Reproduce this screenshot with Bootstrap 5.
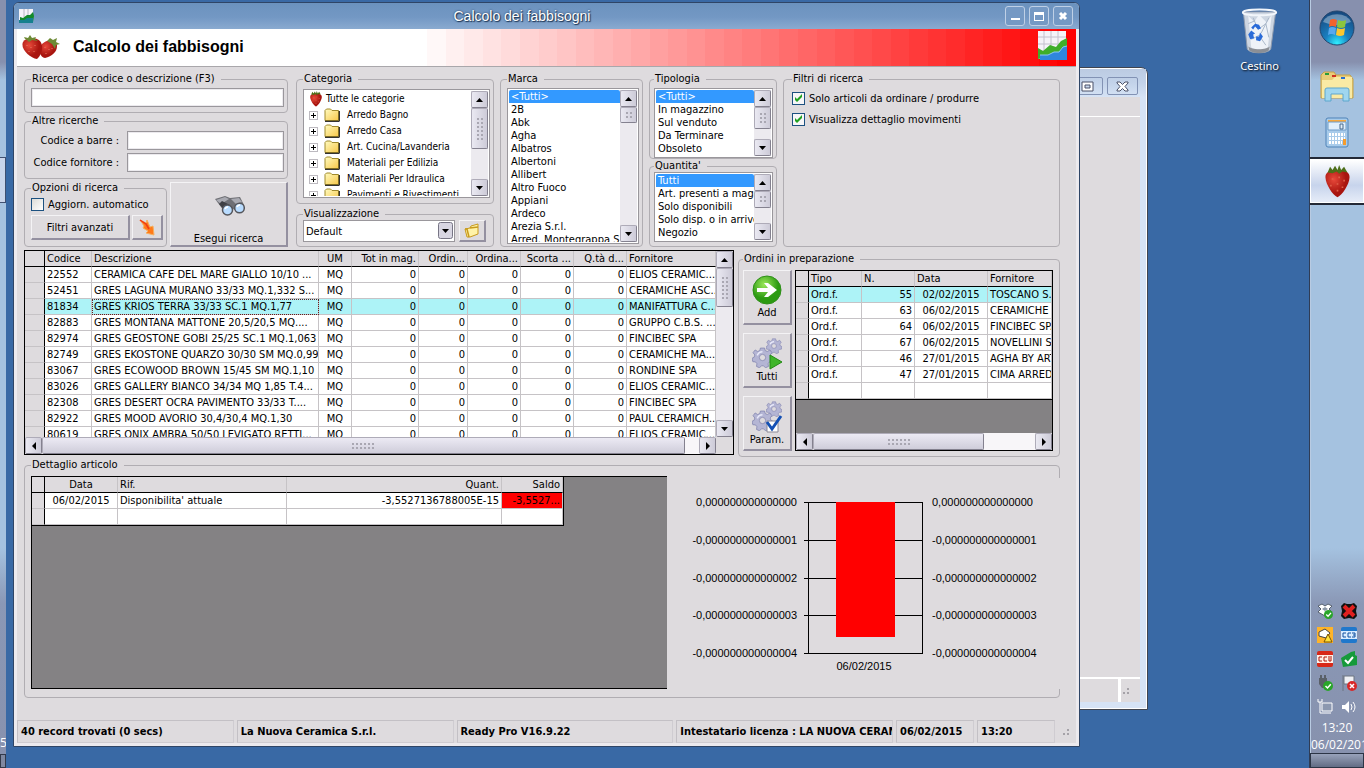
<!DOCTYPE html>
<html lang="it">
<head>
<meta charset="utf-8">
<meta name="viewport" content="width=device-width, initial-scale=1">
<title>Calcolo dei fabbisogni</title>
<link href="https://cdn.jsdelivr.net/npm/bootstrap@5.3.0/dist/css/bootstrap.min.css" rel="stylesheet">
<style>
:root{--face:#dedbde;--edge:#b0adb2;--line:#c6c3c6;--sel:#3399ff;--cyan:#adf3f7;--ui:"DejaVu Sans Condensed","DejaVu Sans",sans-serif}
body{font-family:var(--ui);font-size:11px;line-height:13px;color:#000;background:#3969a5;overflow:hidden}
svg{display:block;flex:none}
/* desktop */
.strip,.taskbar{background:linear-gradient(#8790ae 0,#8790ae 62px,#a5c2e0 80px,#a5c2e0 calc(100% - 220px),#8a98b6 calc(100% - 165px),#8791ad 100%)}
.strip{width:6px;flex:none;overflow:hidden;color:#fff;font:12px/14px "Open Sans",sans-serif}
.strip-task{height:46px;margin-top:157px;border:1px solid #405070;border-left:0;background:#c9d5ea}
.strip-end{height:14px;border:1px solid #333a4a;background:#7f88a0}
.desk{width:229px;padding-top:8px;padding-right:30px}
.desk-item{color:#fff;font:11px/14px "Noto Sans",sans-serif;text-shadow:1px 1px 2px #000;text-decoration:none}
.taskbar{width:55px;border-left:1px solid #2f3c55;box-shadow:inset 1px 0 #b9cbe2;overflow:hidden}
.taskbar button{background:none;border:0;padding:0}
.task-on.task-on{background:linear-gradient(#fff,#d5def0 45%,#c7d4ec 60%,#e6ecf8);border:1px solid #fff;outline:2px solid #232936;height:44px}
.tray{display:grid;grid-template-columns:16px 16px;gap:8px;margin-bottom:4px}
.clock{color:#fff;font:12px/17px "Open Sans","Noto Sans",sans-serif;white-space:nowrap}
.show-desk{height:15px;border:1px solid #2c3546;background:linear-gradient(#98a2ba,#626c84)}
/* windows */
.win{background:var(--face);border:1px solid #2f4566;border-radius:6px 6px 0 0;margin:2px 0 21px 7px;box-shadow:inset 0 0 0 1px #dfe7f2;z-index:2}
.win-body{margin:0 3px 3px;box-shadow:0 0 0 3px #eceaee}
.titlebar{height:26px;background:linear-gradient(#6b92be,#7398c4 55%,#8aaad0);border-radius:5px 5px 0 0;padding:0 6px 0 5px;color:#fff;position:relative;z-index:1}
.titlebar h1{font:14px/18px "Liberation Sans",sans-serif;text-shadow:1px 1px 1px #1d3555,0 0 2px #1d3555}
.cap{width:20px;height:20px;padding:0;border:1px solid #bfd0e6;border-radius:3px;background:#7599c4}
.backwin{right:216px;left:60px;top:67px;bottom:58px;border:1px solid #41454f;border-radius:7px 7px 0 0;background:#d6e3f5;padding:0 7px 7px;box-shadow:inset 0 0 0 1px #fff}
.back-title{height:28px;background:linear-gradient(#bccbe2,#c3d3ea 50%,#d6e3f5);margin:1px -6px 0;padding:8px 8px 2px}
.back-title button{height:18px;border:1px solid #8292b4;border-radius:2px;background:none;padding:0}
.back-client{background:var(--face)}
.back-menu{height:20px;border-bottom:1px solid #fff}
.back-status{height:25px;border-top:2px solid #fff}
.back-grip{width:22px;border-left:3px solid #fff}
/* banner */
.banner{height:38px;background:#fff;border-bottom:1px solid #a9a7ab;position:relative}
.banner h2{font:bold 16px/20px "Liberation Sans",sans-serif;margin-top:-2px}
.fade-steps{position:absolute;left:37%;right:0;top:0;bottom:0}
.banner-row{position:relative}
/* page body */
.page{padding:6px 16px 0 7px}
.filters{gap:6px;height:174px}
/* group boxes */
fieldset{border:1px solid var(--edge);border-radius:4px;padding:3px 3px 5px 6px}
legend{float:none;width:auto;font-size:11px;line-height:12px;padding:0 6px 0 1px;margin:0}
legend label{display:block}
.field,.listbox,.combo{background:#fff;border:1px solid #9a979c;border-radius:0;font-size:11px}
.field{height:19px;min-width:0;outline:1px solid #eceaee;outline-offset:-2px}
.btn3{background:var(--face);border:1px solid #f4f3f5;border-right:2px solid #9490a0;border-bottom:2px solid #9490a0;border-radius:0;padding:0;font-size:11px;line-height:13px;color:#000}
.tick{appearance:none;width:13px;height:13px;border:1px solid #1c5180;margin:0;background:linear-gradient(135deg,#dcdcd7,#fff)}
.tick:checked{background:#f7f6f8 url("data:image/svg+xml,%3Csvg xmlns='http://www.w3.org/2000/svg' viewBox='0 0 11 11'%3E%3Cpath d='M2 4v3l2 2 5-5V1L4 6z' fill='%2321a121'/%3E%3C/svg%3E")}
/* lists */
.listbox{padding:1px;overflow:hidden}
.listbox select{appearance:none;border:0;outline:0;padding:0;background:#fff;overflow:hidden;font:11px/13px var(--ui);flex:1 1 0;min-width:0;height:100%;scrollbar-width:none}
.listbox option{padding:0 0 0 2px;min-height:13px;height:13px;line-height:13px}
.listbox option:checked{background:linear-gradient(var(--sel),var(--sel));-webkit-text-fill-color:#fff}
.combo{appearance:none;height:22px;padding:0 2px;color:#000;background:#fff url("data:image/svg+xml,%3Csvg xmlns='http://www.w3.org/2000/svg' width='15' height='18'%3E%3Crect x='.5' y='.5' width='14' height='16' rx='2' fill='%23d8d6e2' stroke='%23777585'/%3E%3Cpath d='M4 7h7l-3.500 4z'/%3E%3C/svg%3E") no-repeat right 1px center}
.tree{font-size:10px;line-height:16px;list-style:none;margin:0;padding:0;white-space:nowrap;overflow:hidden}
.tree li{height:16px;gap:3px}
.node-box{width:9px;height:9px;margin:0 3px 0 4px;border:1px solid #bdbac0;background:#fff}
/* scroll bars */
.sb{background:#eceaef;width:17px;flex:none;display:flex;flex-direction:column}
.sb.hz{width:auto;height:17px;flex-direction:row;background:#f8f6f9}
.sb button,.thumb{border:1px solid #84818f;border-top-color:#aeabb8;border-left-color:#aeabb8;border-radius:2px;background:linear-gradient(90deg,#eae9f2,#cdcbd8);padding:0}
.sb button{width:17px;height:17px;display:flex;align-items:center;justify-content:center;flex:none}
.thumb{display:flex;align-items:center;justify-content:center}
.hz .thumb{background:linear-gradient(#eceaf4,#cfcdda)}
.dots{width:8px;height:60%;max-height:24px;background:radial-gradient(#a9a7b2 1px,transparent 1px) 0 0/4px 4px}
.hz .dots{width:24px;height:8px}
/* grids */
.pane{border:1px solid #000;background:#848284;overflow:hidden}
.grid{table-layout:fixed;border-collapse:separate;border-spacing:0;width:100%;background:#fff}
.grid th,.grid td{height:16px;padding:1px 2px 0;line-height:14px;font-weight:400;white-space:nowrap;overflow:hidden;border-right:1px solid var(--line);border-bottom:1px solid var(--line)}
.grid th{background:var(--face);border-bottom-color:#000}
.grid th:first-child,.grid td:first-child{background:var(--face);border-right-color:#000}
.grid .sel td:not(:first-child){background:var(--cyan)}
.grid .cur{outline:1px dotted #602020;outline-offset:-1px}
.main-pane{height:205px}
.detail-pane{height:213px;border-right:0;margin-top:-2px}
.detail-grid{width:531px;border-right:1px solid #000;border-bottom:1px solid #000}
.grid .neg{background:#f00}
.order-grid{border-bottom:1px solid #000}
.chart-pane{width:393px;margin-right:-1px;padding-left:3px;background:var(--face);flex:none}
.chart-pane text{font:11px "Liberation Sans",sans-serif}
/* status bar */
.status{gap:3px;font-weight:700;font-size:11px;height:23px}
.status>span{border:1px solid #c3c0c5;border-right-color:#cfccd1;border-bottom-color:#cfccd1;padding:0 3px;line-height:22px;white-space:nowrap;overflow:hidden;flex:217 1 0}
.status>.fixed{flex:0 0 78px}
.col-a{width:266px;padding-right:2px}.col-b{width:198px}.col-c{width:143px}.col-d{width:128px}
.codes{height:64px;margin:2px 0 3px}
.opt-row{gap:3px;height:65px}
.opt-box{width:143px}
.orders{width:322px;margin-top:3px;padding:5px 6px 5px 4px}
.order-row{gap:3px}
.tools{width:49px}
.order-pane{height:181px;min-width:0}
</style>
</head>
<body>
<svg width="0" height="0" class="position-absolute" aria-hidden="true">
<defs>
<linearGradient id="gy" x1="0" y1="0" x2="1" y2="1"><stop stop-color="#fffbc0"/><stop offset="1" stop-color="#f7c84a"/></linearGradient>
<radialGradient id="gr" cx=".35" cy=".35"><stop stop-color="#e8493a"/><stop offset="1" stop-color="#a8150f"/></radialGradient>
<radialGradient id="gg" cx=".4" cy=".3"><stop stop-color="#9be85a"/><stop offset="1" stop-color="#2c9a12"/></radialGradient>
<symbol id="up" viewBox="0 0 7 4"><path d="M0 4h7L3.500 0z"/></symbol>
<symbol id="dn" viewBox="0 0 7 4"><path d="M0 0h7L3.500 4z"/></symbol>
<symbol id="lf" viewBox="0 0 4 8"><path d="M4 0v8L0 4z"/></symbol>
<symbol id="rt" viewBox="0 0 4 8"><path d="M0 0v8l4-4z"/></symbol>
<symbol id="berry" viewBox="0 0 16 20"><path d="M8 19.500C5 18 1 12 .7 7.500 .5 4.500 3 3 8 3s7.500 1.500 7.300 4.500C15 12 11 18 8 19.500z" fill="url(#gr)"/><path d="M5 8v1M9 7v1M12 9v1M4 12v1M8 11v1M11 13v1M8 15v1" stroke="#e0604a"/><path d="M2 4.500L3.500 1 5 3 6.500.5 8 3l1-3 1.200 3L12 1l2 3.500-3-.6-2 1.400-1.500-1.400L5 5z" fill="#4d6e18"/></symbol>
<symbol id="gear" viewBox="-10 -10 20 20"><g fill="#b4b5d4" stroke="#7e80ac" stroke-width=".7"><path d="M-2-9h4l.6 2.400 2 .9L7-7.200 9-4.600 7.300-2.400 8-.2 10 .8 9.200 4l-2.500.2-1.400 1.700L5.700 8.500 2.800 9.800 1 7.900H-1L-2.800 9.800-5.700 8.500-5.300 5.900-6.700 4.200-9.200 4-10 .8-8-.2-7.300-2.400-9-4.600-7-7.200l2.400 1.500 2-.9z"/><circle r="3" fill="#dedbde"/></g><path d="M-5-2A5.500 5.500 0 0 1 0-5.500" stroke="#e9eafa" stroke-width="1.500" fill="none"/></symbol>
<symbol id="folder" viewBox="0 0 16 14"><path d="M1 12.500V2.500L2.500 1h4L8 2.500h6.500v10z" fill="url(#gy)" stroke="#a08a2c"/><path d="M1 13.300h14.300V3" fill="none" stroke="#000"/></symbol>
<symbol id="graph" viewBox="0 0 31 31"><path d="M1 1h28v28H1z" fill="#f5f3f8"/><path d="M1 7h28M1 14h28M1 21h28M7 1v28M14 1v28M21 1v28" stroke="#c3c0cc"/><path d="M1 18l5 3 7-6 6 2 5-6 6-3v16L1 29z" fill="#3fae2a"/><path d="M3 30v-5l8 0 6-3 5 0 4-5 4-1v14z" fill="#2f86dd"/><path d="M3 25h8l6-3h5l4-5 4-1" fill="none" stroke="#8cc6f6"/></symbol>
<symbol id="graph-sm" viewBox="0 0 16 16"><path d="M0 1h14v12H0z" fill="#f5f3f8"/><path d="M5 1v8M9 1v6" stroke="#b8b6c2"/><path d="M1 9l3 1 4-3 3 0 3-3 1 4-1 6H1z" fill="#138a2a"/><path d="M0 12h5l3-2h6v5H0z" fill="#16808e"/></symbol>
<symbol id="tick" viewBox="0 0 10 10"><circle cx="5" cy="5" r="5" fill="#2aa52a"/><path d="M2.500 5l2 2L7.800 3.200" fill="none" stroke="#fff" stroke-width="1.500"/></symbol>
</defs>
</svg>

<div class="d-flex vh-100 position-relative">
  <div class="strip d-flex flex-column"><div class="strip-task"></div><span class="mt-auto">5</span><div class="strip-end mt-1"></div></div>

  <section class="backwin position-absolute d-flex flex-column" aria-label="Finestra in secondo piano">
    <div class="back-title d-flex justify-content-end gap-1">
      <button type="button" aria-label="Ripristina" class="px-2"><svg width="13" height="11"><path d="M1 1h11v9H1zM4 4h5v3H4z" fill="#fff" fill-rule="evenodd" stroke="#4a5068"/></svg></button>
      <button type="button" aria-label="Chiudi" class="px-2"><svg width="13" height="11"><path d="M1 1h3l2.500 2.500L9 1h3v1L9 5.500 12 9v1H9L6.500 7.500 4 10H1V9l3-3.500L1 2z" fill="#fff" stroke="#4a5068"/></svg></button>
    </div>
    <div class="back-client flex-grow-1 d-flex flex-column"><div class="back-menu"></div><div class="back-status d-flex mt-auto justify-content-end"><div class="back-grip"><svg width="16" height="22"><path d="M2 13h2v2H2zM6 13h2v2H6zM6 9h2v2H6z" fill="#a5a2a8"/></svg></div></div></div>
  </section>

  <main class="win flex-grow-1 d-flex flex-column position-relative" style="min-width:0">
    <header class="titlebar d-flex align-items-center gap-1">
      <svg width="16" height="16" aria-hidden="true"><use href="#graph-sm"/></svg>
      <h1 class="m-0 flex-grow-1 text-center ps-1">Calcolo dei fabbisogni</h1>
      <button class="cap" type="button" aria-label="Riduci"><svg width="18" height="18"><path d="M5 11h9v2H5z" fill="#fff"/></svg></button>
      <button class="cap" type="button" aria-label="Ingrandisci"><svg width="18" height="18"><path d="M4 5h10v9H4zM5 8v5h8V8z" fill="#fff" fill-rule="evenodd"/></svg></button>
      <button class="cap" type="button" aria-label="Chiudi"><svg width="18" height="18"><path d="M6 6l6 6M12 6l-6 6" stroke="#fff" stroke-width="3"/></svg></button>
    </header>

    <div class="win-body flex-grow-1 d-flex flex-column">
      <div class="banner">
        <div class="fade-steps d-flex" id="fade"></div>
        <div class="banner-row d-flex align-items-center h-100">
          <svg width="40" height="26" viewBox="0 0 40 26" class="ms-1 me-2" aria-hidden="true"><path d="M21 9c6-6 15-4 15 2 0 6-5 10-12 12-5 0-7-9-3-14z" fill="url(#gr)"/><path d="M2 7c3-5 13-5 17-1 4 5 2 14-3 18C9 23-1 14 2 7z" fill="url(#gr)"/><path d="M4 4l-1-2 4 1 2-3 2 3 4-1-1 2 3 2-6-1-3 2-2-2zM26 6l3-3 3 2 4-2-1 4 4 2-4 1-1 4-3-5z" fill="#6d8a34"/><path d="M6 10v1M10 12v1M14 10v1M8 16v1M13 16v1M24 12v1M28 14v1M25 18v1M31 13v1" stroke="#e87a60"/></svg>
          <h2 class="mb-0 flex-grow-1 ps-1">Calcolo dei fabbisogni</h2>
          <svg width="31" height="31" class="me-2 mb-1" aria-hidden="true"><use href="#graph"/></svg>
        </div>
      </div>

      <div class="page d-flex flex-column">
        <div class="filters d-flex">
          <div class="col-a flex-shrink-0">
            <fieldset class="d-flex"><legend><label for="q">Ricerca per codice o descrizione (F3)</label></legend><input id="q" class="field w-100"></fieldset>
            <fieldset class="codes pt-1"><legend>Altre ricerche</legend>
              <div class="d-flex align-items-center"><label for="cb" class="text-end pe-2" style="width:96px">Codice a barre :</label><input id="cb" class="field flex-grow-1"></div>
              <div class="d-flex align-items-center" style="margin-top:3px"><label for="cf" class="text-end pe-2" style="width:96px">Codice fornitore :</label><input id="cf" class="field flex-grow-1"></div>
            </fieldset>
            <div class="opt-row d-flex">
              <fieldset class="opt-box pt-1"><legend>Opzioni di ricerca</legend>
                <div class="d-flex align-items-center mb-1 gap-1"><input class="tick" type="checkbox" id="aa"><label for="aa">Aggiorn. automatico</label></div>
                <div class="d-flex" style="gap:2px"><button type="button" class="btn3 flex-grow-1" style="height:25px">Filtri avanzati</button><button type="button" class="btn3 px-1" aria-label="Rimuovi filtri"><svg width="20" height="18"><path d="M3 2l6 3 1-3 3 7 3-1 1 9-8-2 2-2-5-3 1-2z" fill="#ff7a1a" stroke="#f5b060"/><path d="M3 2l6 4 3 5" fill="none" stroke="#f03c14" stroke-width="1.500"/></svg></button></div>
              </fieldset>
              <button type="button" class="btn3 flex-grow-1 d-flex flex-column align-items-center justify-content-between pt-2">
                <svg width="32" height="32" viewBox="0 0 32 32"><path d="M2 8l10-3 5 2 10-1 4 8-7 6-6-3-6 5-4-6z" fill="#6f7076"/><path d="M3 9l9-3 4 2-8 5zM18 8l8-1 3 4-6 2z" fill="#a9aab2"/><path d="M6 13l3-3 8 4-3 8z" fill="#3e3f44"/><circle cx="14.500" cy="19" r="5" fill="#b9dcff" stroke="#55565c" stroke-width="1.500"/><circle cx="26.500" cy="17" r="4.800" fill="#b9dcff" stroke="#55565c" stroke-width="1.500"/><path d="M12 18a3 3 0 0 1 3-2M24 16a3 3 0 0 1 3-2" stroke="#fff" stroke-width="1.500" fill="none"/></svg>
                <span>Esegui ricerca</span></button>
            </div>
          </div>

          <div class="col-b d-flex flex-column justify-content-between flex-shrink-0">
            <fieldset class="pt-1"><legend>Categoria</legend>
              <div class="listbox d-flex" style="height:109px">
                <ul class="tree flex-grow-1" id="tree"></ul>
                <div class="sb"><button type="button" tabindex="-1" aria-label="Su"><svg width="7" height="4"><use href="#up"/></svg></button><div class="thumb" style="height:41px"><i class="dots"></i></div><button type="button" class="mt-auto" tabindex="-1" aria-label="Giù"><svg width="7" height="4"><use href="#dn"/></svg></button></div>
              </div>
            </fieldset>
            <fieldset class="pt-0 pb-1"><legend><label for="vis">Visualizzazione</label></legend>
              <div class="d-flex gap-1"><select class="combo flex-grow-1" id="vis"><option>Default</option></select>
              <button type="button" class="btn3 px-1 me-1" aria-label="Apri"><svg width="16" height="18" viewBox="0 0 16 18"><path d="M1 7l5-1 1-2 7-2v10l-8 3H3z" fill="#fff3a8" stroke="#c89a1c"/><path d="M1 7h2l2 8M6 6l8-1" fill="none" stroke="#c89a1c" stroke-width="1.500"/></svg></button></div>
            </fieldset>
          </div>

          <fieldset class="col-c flex-shrink-0"><legend><label for="marca">Marca</label></legend>
            <div class="listbox d-flex" style="height:156px"><select id="marca" size="12"><option selected>&lt;Tutti&gt;</option><option>2B</option><option>Abk</option><option>Agha</option><option>Albatros</option><option>Albertoni</option><option>Allibert</option><option>Altro Fuoco</option><option>Appiani</option><option>Ardeco</option><option>Arezia S.r.l.</option><option>Arred. Montegrappa S.</option></select>
              <div class="sb"><button type="button" tabindex="-1" aria-label="Su"><svg width="7" height="4"><use href="#up"/></svg></button><div class="thumb" style="height:16px"><i class="dots"></i></div><button type="button" class="mt-auto" tabindex="-1" aria-label="Giù"><svg width="7" height="4"><use href="#dn"/></svg></button></div></div>
          </fieldset>

          <div class="col-d d-flex flex-column justify-content-between flex-shrink-0">
            <fieldset class="pb-0 ps-1"><legend><label for="tipo">Tipologia</label></legend>
              <div class="listbox d-flex" style="height:70px"><select id="tipo" size="5"><option selected>&lt;Tutti&gt;</option><option>In magazzino</option><option>Sul venduto</option><option>Da Terminare</option><option>Obsoleto</option></select>
              <div class="sb"><button type="button" tabindex="-1" aria-label="Su"><svg width="7" height="4"><use href="#up"/></svg></button><div class="thumb" style="height:22px"><i class="dots"></i></div><button type="button" class="mt-auto" tabindex="-1" aria-label="Giù"><svg width="7" height="4"><use href="#dn"/></svg></button></div></div>
            </fieldset>
            <fieldset class="pt-0 pb-1 ps-1"><legend><label for="qta">Quantita'</label></legend>
              <div class="listbox d-flex" style="height:70px"><select id="qta" size="5"><option selected>Tutti</option><option>Art. presenti a magazzino</option><option>Solo disponibili</option><option>Solo disp. o in arrivo</option><option>Negozio</option></select>
              <div class="sb"><button type="button" tabindex="-1" aria-label="Su"><svg width="7" height="4"><use href="#up"/></svg></button><div class="thumb" style="height:17px"><i class="dots"></i></div><button type="button" class="mt-auto" tabindex="-1" aria-label="Giù"><svg width="7" height="4"><use href="#dn"/></svg></button></div></div>
            </fieldset>
          </div>

          <fieldset class="flex-grow-1 ps-2"><legend>Filtri di ricerca</legend>
            <div class="d-flex align-items-center gap-1 mt-1 mb-2"><input class="tick" type="checkbox" id="f1" checked><label for="f1">Solo articoli da ordinare / produrre</label></div>
            <div class="d-flex align-items-center gap-1"><input class="tick" type="checkbox" id="f2" checked><label for="f2">Visualizza dettaglio movimenti</label></div>
          </fieldset>
        </div>

        <div class="d-flex gap-1" style="margin-top:3px">
          <div class="pane main-pane flex-grow-1 d-flex flex-column" style="min-width:0">
            <div class="d-flex flex-grow-1 overflow-hidden">
              <div class="flex-grow-1 overflow-hidden">
                <table class="grid"><colgroup><col style="width:20px"><col style="width:47px"><col style="width:227px"><col style="width:33px"><col style="width:67px"><col style="width:49px"><col style="width:53px"><col style="width:53px"><col style="width:53px"><col></colgroup>
                <thead><tr><th></th><th>Codice</th><th>Descrizione</th><th class="text-center">UM</th><th class="text-end">Tot in mag.</th><th class="text-end">Ordin...</th><th class="text-end">Ordina...</th><th class="text-end">Scorta ...</th><th class="text-end">Q.tà d...</th><th>Fornitore</th></tr></thead>
                <tbody id="articoli"></tbody></table>
              </div>
              <div class="sb"><button type="button" tabindex="-1" aria-label="Su"><svg width="7" height="4"><use href="#up"/></svg></button><div class="thumb" style="height:39px"><i class="dots"></i></div><button type="button" class="mt-auto" tabindex="-1" aria-label="Giù"><svg width="7" height="4"><use href="#dn"/></svg></button></div>
            </div>
            <div class="d-flex" style="background:var(--face)"><div class="sb hz flex-grow-1"><button type="button" tabindex="-1" aria-label="Sinistra"><svg width="4" height="8"><use href="#lf"/></svg></button><div class="thumb" style="width:93%"><i class="dots"></i></div><button type="button" class="ms-auto" tabindex="-1" aria-label="Destra"><svg width="4" height="8"><use href="#rt"/></svg></button></div><div style="width:17px"></div></div>
          </div>

          <fieldset class="orders flex-shrink-0"><legend>Ordini in preparazione</legend>
            <div class="order-row d-flex">
            <div class="tools d-flex flex-column justify-content-between flex-shrink-0">
              <button type="button" class="btn3 d-flex flex-column align-items-center justify-content-between pt-1" style="height:55px"><svg width="30" height="30"><circle cx="15" cy="15" r="14" fill="url(#gg)" stroke="#2f8f1a"/><path d="M5 13h11L12 8h4l9 7-9 7h-4l4-5H5z" fill="#fff"/></svg><span class="pb-1">Add</span></button>
              <button type="button" class="btn3 d-flex flex-column align-items-center justify-content-between pt-1" style="height:55px"><svg width="32" height="32" viewBox="0 0 32 32"><use href="#gear" x="15" y="0" width="16" height="16"/><use href="#gear" x="1" y="9" width="21" height="21"/><path d="M19 17v14l12-7z" fill="#3fb52a" stroke="#238a14"/></svg><span class="pb-1">Tutti</span></button>
              <button type="button" class="btn3 d-flex flex-column align-items-center justify-content-between pt-1" style="height:55px"><svg width="32" height="32" viewBox="0 0 32 32"><use href="#gear" x="15" y="0" width="16" height="16"/><use href="#gear" x="1" y="9" width="21" height="21"/><path d="M16 20h11v11H16z" fill="#fff" stroke="#8c8a96"/><path d="M16 21l5 7 9-13" fill="none" stroke="#1450b4" stroke-width="3"/></svg><span class="pb-1">Param.</span></button>
            </div>
            <div class="pane order-pane d-flex flex-column flex-grow-1">
              <table class="grid order-grid"><colgroup><col style="width:13px"><col style="width:53px"><col style="width:53px"><col style="width:73px"><col></colgroup>
              <thead><tr><th></th><th>Tipo</th><th>N.</th><th>Data</th><th>Fornitore</th></tr></thead><tbody id="ordini"></tbody></table>
              <div class="sb hz mt-auto"><button type="button" tabindex="-1" aria-label="Sinistra"><svg width="4" height="8"><use href="#lf"/></svg></button><div class="thumb" style="width:171px"><i class="dots"></i></div><button type="button" class="ms-auto" tabindex="-1" aria-label="Destra"><svg width="4" height="8"><use href="#rt"/></svg></button></div>
            </div>
            </div>
          </fieldset>
        </div>

        <fieldset class="pe-0 pb-2" style="margin-top:2px"><legend>Dettaglio articolo</legend>
          <div class="d-flex pt-1">
            <div class="pane detail-pane flex-grow-1">
              <table class="grid detail-grid"><colgroup><col style="width:13px"><col style="width:73px"><col style="width:169px"><col style="width:215px"><col style="width:61px"></colgroup>
              <thead><tr><th></th><th class="text-center">Data</th><th>Rif.</th><th class="text-end">Quant.</th><th class="text-end">Saldo</th></tr></thead>
              <tbody><tr><td></td><td class="text-center">06/02/2015</td><td>Disponibilita' attuale</td><td class="text-end">-3,5527136788005E-15</td><td class="text-end neg">-3,5527...</td></tr><tr><td></td><td></td><td></td><td></td><td></td></tr></tbody></table>
            </div>
            <div class="chart-pane d-flex align-items-center justify-content-center">
              <svg width="348" height="180" role="img" aria-label="Andamento del saldo">
                <path d="M113 8.500h119M113 46.500h119M113 84.500h119M113 121.500h119M113 159.500h119M117.500 8v152M231.500 8v152" stroke="#000" fill="none"/>
                <rect x="145" y="8" width="59" height="135" fill="#f00"/>
                <g text-anchor="end"><text x="106" y="12">0,000000000000000</text><text x="106" y="50">-0,000000000000001</text><text x="106" y="88">-0,000000000000002</text><text x="106" y="125">-0,000000000000003</text><text x="106" y="163">-0,000000000000004</text></g>
                <text x="241" y="12">0,000000000000000</text><text x="241" y="50">-0,000000000000001</text><text x="241" y="88">-0,000000000000002</text><text x="241" y="125">-0,000000000000003</text><text x="241" y="163">-0,000000000000004</text>
                <text x="173" y="176" text-anchor="middle">06/02/2015</text>
              </svg>
            </div>
          </div>
        </fieldset>
      </div>

      <footer class="status d-flex mt-auto"><span>40 record trovati (0 secs)</span><span>La Nuova Ceramica S.r.l.</span><span>Ready Pro V16.9.22</span><span>Intestatario licenza : LA NUOVA CERAM</span><span class="fixed">06/02/2015</span><span class="fixed">13:20</span><svg width="18" height="22" aria-hidden="true"><path d="M5 13h2v2H5zM9 13h2v2H9zM9 9h2v2H9z" fill="#a5a2a8"/></svg></footer>
    </div>
  </main>

  <aside class="desk flex-shrink-0 d-flex justify-content-end align-items-start" style="z-index:1">
    <a href="#" class="desk-item d-flex flex-column align-items-center gap-1"><svg width="38" height="47" viewBox="0 0 38 48"><path d="M2 4l4 38c3 5 21 5 24 0l5-38z" fill="#cdd6e2" stroke="#8e9bad"/><path d="M7 8l6 6 5-7 8 8 5-8-4 33c-3 3-14 3-17 0z" fill="#eef2f8"/><path d="M12 10l5 12 8-6 3 14M10 32l8-4 7 10M28 10l-8 16M7 16l7-3" stroke="#a9b7c9" fill="none"/><path d="M7 39c3 4 19 4 22 0l-1 4c-3 4-17 4-20 0z" fill="#8b8f96"/><ellipse cx="18.500" cy="4.500" rx="17" ry="3" fill="none" stroke="#f2f6fb" stroke-width="2"/><path d="M10 20l4-4 4 1 2 4-3 1-3-3-2 3zM7 27l3-4 4 3-2 1 1 4-4 1zM15 33v-4h3l1-4 3 4-3 5z" fill="#2a6bd8"/></svg><span>Cestino</span></a>
  </aside>

  <nav class="taskbar flex-shrink-0 d-flex flex-column" aria-label="Barra delle applicazioni">
    <div class="d-flex flex-column align-items-center" style="padding-top:9px">
      <button type="button" aria-label="Start" class="me-0"><svg width="36" height="38" viewBox="0 0 36 38"><defs><radialGradient id="orb" cx=".5" cy=".95" r=".9"><stop stop-color="#2ff0ff"/><stop offset=".4" stop-color="#1a7fc0"/><stop offset="1" stop-color="#164a80"/></radialGradient></defs><circle cx="18" cy="19" r="17" fill="url(#orb)" stroke="#24466e"/><path d="M4 13a15 12 0 0 1 28 0q-14 6-28 0z" fill="#fff" opacity=".35"/><path d="M11 11q3-2 7 0l-1 7q-4-2-7 0z" fill="#f2622c"/><path d="M19 11q4 2 8 0l-1 7q-4 2-8 0z" fill="#8cc63e"/><path d="M10 19q3-2 7 0l-1 7q-4-2-7 0z" fill="#58a8ee"/><path d="M18 19q4 2 8 0l-1 7q-4 2-8 0z" fill="#fdc72e"/></svg></button>
      <button type="button" aria-label="Esplora risorse" style="margin-top:24px"><svg width="34" height="31" viewBox="0 0 34 31"><path d="M1 27V4l3-3h10l2 3h14l3 4v19z" fill="#e9cd78" stroke="#c3a048"/><path d="M2 27V9h10l3-3h17v21z" fill="#faeaa4"/><path d="M5 2h4v2H5z" fill="#2a9c3a"/><path d="M12 4h4v2h-4z" fill="#d03020"/><path d="M21 6h4v2h-4z" fill="#2a70d0"/><path d="M5 30V19q0-2 2-2h20q2 0 2 2v11h-6v-7H11v7z" fill="#9fd6ef" stroke="#5fa6cc"/></svg></button>
      <button type="button" aria-label="Calcolatrice" style="margin-top:15px"><svg width="24" height="31" viewBox="0 0 24 31"><rect x="1" y="1" width="22" height="29" rx="2" fill="#a8cbea" stroke="#4f83b8"/><path d="M3 3h18v2H3z" fill="#f7a83c"/><path d="M3 5h18v8H3z" fill="#e2f0fb" stroke="#6f9cc8"/><path d="M15 7h3v5h-3z" fill="none" stroke="#46688c"/><path d="M4 17.500h16M4 21.500h16M4 25.500h13" stroke="#fff" stroke-width="3" stroke-dasharray="2 1"/><path d="M18 22h3v6h-3z" fill="#f59b2c"/></svg></button>
    </div>
    <button type="button" class="task-on d-flex justify-content-center align-items-center" style="margin-top:11px" aria-label="Ready Pro"><svg width="27" height="33"><use href="#berry"/></svg></button>
    <div class="tray mt-auto mx-auto">
      <svg width="16" height="16"><path d="M1 3l4-2 3 2 3-2 4 2-3 3 3 3-7 4-7-4 3-3z" fill="#fff" stroke="#55606e"/><path d="M5 6l3-2 3 2-3 2z" fill="#8a96a4"/><use href="#tick" x="7" y="7" width="9" height="9"/></svg>
      <svg width="16" height="16"><path d="M0 3l3-3 3 1h4l3-1 3 3-1 5 1 5-3 3-5-1-5 1-3-3 1-5z" fill="#101010"/><path d="M3 3l10 10M13 3L3 13" stroke="#e02020" stroke-width="4"/></svg>
      <svg width="16" height="16"><path d="M0 0h16v16H0z" fill="#ffb428"/><path d="M2 5l6-3 5 4-4 5-7-2z" fill="#fff" stroke="#444"/><path d="M7 15l4-8 4 8z" fill="#ffe23a" stroke="#7a5200"/></svg>
      <svg width="16" height="16"><rect width="16" height="16" rx="2" fill="#2078cc"/><path d="M0 4h16v8H0z" fill="#d8ecff"/><path d="M5 6H2v4h3M10 6H7v4h3M11 6h3v4h-3M12 8h2" fill="none" stroke="#1050a0"/></svg>
      <svg width="16" height="16"><rect width="16" height="16" rx="2" fill="#d82818"/><path d="M0 4h16v8H0z" fill="#fff0e8"/><path d="M5 6H2v4h3M10 6H7v4h3M12 5v5h2V5" fill="none" stroke="#b01808"/></svg>
      <svg width="16" height="16"><path d="M0 7l10-6 4-1v4l2 1v9l-14 2z" fill="#169a3a"/><path d="M4 9l3 3 5-6" fill="none" stroke="#fff" stroke-width="2"/></svg>
      <svg width="16" height="16"><path d="M2 3h1V0h2v3h2V0h2v3h1v6l-3 4H5L2 9z" fill="#5a6068"/><use href="#tick" x="6" y="6" width="10" height="10"/></svg>
      <svg width="16" height="16"><path d="M2 0v16M3 1h10v8H3z" fill="#eef0f4" stroke="#6c7480"/><circle cx="11" cy="11" r="5" fill="#d82828"/><path d="M9 9l4 4M13 9l-4 4" stroke="#fff" stroke-width="1.500"/></svg>
      <svg width="16" height="16"><path d="M5 4h10v8H5zM7 14h7" fill="#8c98b0" stroke="#fff"/><path d="M1 0v3h4V0M3 3v11h4" fill="none" stroke="#fff"/></svg>
      <svg width="16" height="16"><path d="M1 6h3l4-4v12l-4-4H1z" fill="#fff"/><path d="M10 5q2 3 0 6M12 3q4 5 0 10" fill="none" stroke="#fff"/></svg>
    </div>
    <div class="clock text-center">13:20</div>
    <div class="clock" style="padding-left:1px">06/02/2015</div>
    <div class="show-desk"></div>
  </nav>
</div>

<script>
const steps = 36, fade = document.getElementById('fade');
for (let i = 0; i < steps; i++) {
  const s = document.createElement('span'), v = Math.round(255 * (1 - i / (steps - 1)));
  s.className = 'flex-fill';
  s.style.background = `rgb(255,${v},${v})`;
  fade.append(s);
}
const articoli = [
  ['22552','CERAMICA CAFE DEL MARE GIALLO 10/10 ...','ELIOS CERAMIC...'],
  ['52451','GRES LAGUNA MURANO 33/33 MQ.1,332 S...','CERAMICHE ASC...'],
  ['81834','GRES KRIOS TERRA 33/33 SC.1 MQ.1,77','MANIFATTURA C...'],
  ['82883','GRES MONTANA MATTONE 20,5/20,5 MQ....','GRUPPO C.B.S. ...'],
  ['82974','GRES GEOSTONE GOBI 25/25 SC.1 MQ.1,063','FINCIBEC SPA'],
  ['82749','GRES EKOSTONE QUARZO 30/30 SM MQ.0,99','CERAMICHE MA...'],
  ['83067','GRES ECOWOOD BROWN 15/45 SM MQ.1,10','RONDINE SPA'],
  ['83026','GRES GALLERY BIANCO 34/34 MQ 1,85 T.4...','ELIOS CERAMIC...'],
  ['82308','GRES DESERT OCRA PAVIMENTO 33/33 T....','FINCIBEC SPA'],
  ['82922','GRES MOOD AVORIO 30,4/30,4 MQ.1,30','PAUL CERAMICH...'],
  ['80619','GRES ONIX AMBRA 50/50 LEVIGATO RETTI...','ELIOS CERAMIC...']];
document.getElementById('articoli').innerHTML = articoli.map(([c, d, f], i) =>
  `<tr class="${i === 2 ? 'sel' : ''}"><td></td><td>${c}</td><td class="${i === 2 ? 'cur' : ''}">${d}</td><td class="text-center">MQ</td>${'<td class="text-end">0</td>'.repeat(5)}<td>${f}</td></tr>`).join('');
const ordini = [['55','02/02/2015','TOSCANO S.R.L.'],['63','06/02/2015','CERAMICHE ASCOT'],['64','06/02/2015','FINCIBEC SPA'],['67','06/02/2015','NOVELLINI SPA'],['46','27/01/2015','AGHA BY ARTE'],['47','27/01/2015','CIMA ARREDO']];
document.getElementById('ordini').innerHTML = ordini.map(([n, d, f], i) =>
  `<tr class="${i ? '' : 'sel'}"><td></td><td>Ord.f.</td><td class="text-end">${n}</td><td class="text-center">${d}</td><td>${f}</td></tr>`).join('') + '<tr><td></td><td></td><td></td><td></td><td></td></tr>';
document.getElementById('tree').innerHTML =
  '<li class="d-flex align-items-center"><svg width="14" height="16" class="ms-1"><use href="#berry"/></svg>Tutte le categorie</li>' +
  ['Arredo Bagno','Arredo Casa','Art. Cucina/Lavanderia','Materiali per Edilizia','Materiali Per Idraulica','Pavimenti e Rivestimenti'].map(t =>
  `<li class="d-flex align-items-center"><svg class="node-box" viewBox="0 0 7 7"><path d="M1 3.500h5M3.500 1v5" stroke="#000"/></svg><svg width="16" height="14" class="me-1"><use href="#folder"/></svg>${t}</li>`).join('');
</script>
<script src="https://cdn.jsdelivr.net/npm/bootstrap@5.3.0/dist/js/bootstrap.bundle.min.js"></script>
</body>
</html>
